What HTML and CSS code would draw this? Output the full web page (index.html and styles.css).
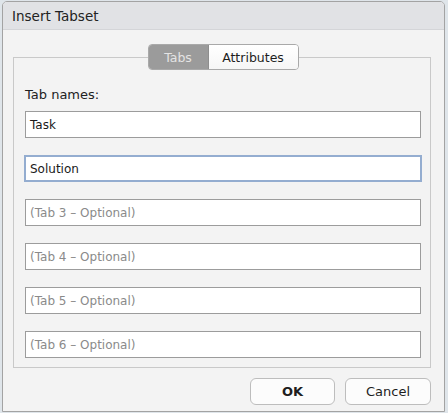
FILE: index.html
```html
<!DOCTYPE html>
<html>
<head>
<meta charset="utf-8">
<link rel="stylesheet" href="styles.css">
</head>
<body>
<div class="dialog">
  <div class="titlebar">Insert Tabset</div>
  <div class="content">
    <fieldset class="panel">
      <legend class="seg">
        <span class="seg-item seg-active">Tabs</span><span class="seg-item">Attributes</span>
      </legend>
      <div class="label">Tab names:</div>
      <div class="field">Task</div>
      <div class="field field-focus">Solution</div>
      <div class="field field-ph">(Tab 3 – Optional)</div>
      <div class="field field-ph">(Tab 4 – Optional)</div>
      <div class="field field-ph">(Tab 5 – Optional)</div>
      <div class="field field-ph">(Tab 6 – Optional)</div>
    </fieldset>
    <div class="buttons">
      <div class="btn btn-ok">OK</div>
      <div class="btn">Cancel</div>
    </div>
  </div>
</div>
</body>
</html>
```

FILE: styles.css
```css
html, body {
  margin: 0;
  padding: 0;
}
body {
  width: 448px;
  height: 413px;
  background: #dfe5ea;
  padding: 1px 0 0 2px;
  box-sizing: border-box;
  font-family: "DejaVu Sans", "Liberation Sans", sans-serif;
  overflow: hidden;
}
.dialog {
  width: 443px;
  height: 411px;
  box-sizing: border-box;
  border: 1px solid #a3a3a3;
  border-radius: 5px 5px 0 0;
  background: #f3f3f3;
  display: flex;
  flex-direction: column;
  overflow: hidden;
}
.titlebar {
  height: 28px;
  box-sizing: border-box;
  background: #e1e2e5;
  border-bottom: 1px solid #d4d5d8;
  padding: 6px 0 0 9px;
  font-size: 13.5px;
  color: #222;
}
.content {
  flex: 1;
  display: flex;
  flex-direction: column;
  padding: 14px 13px 0 10px;
}
.panel {
  margin: 0;
  border: 1px solid #c9c9c9;
  padding: 0 9px 9px 11px;
  display: flex;
  flex-direction: column;
  gap: 17px;
}
.seg {
  margin: 0 auto;
  padding: 0;
  display: flex;
  border: 1px solid #a9a9a9;
  border-radius: 4px;
  overflow: hidden;
  height: 26px;
  box-sizing: border-box;
  font-size: 12.5px;
}
.seg-item {
  display: flex;
  align-items: center;
  justify-content: center;
  background: linear-gradient(#ffffff, #f6f6f6);
  color: #1e1e1e;
  width: 89px;
}
.seg-active {
  width: 59px;
  background: #9b9b9b;
  color: #e4e4e4;
  border-right: 1px solid #8e8e8e;
}
.label {
  font-size: 13px;
  color: #222;
  margin-top: 17px;
  margin-bottom: -9px;
  height: 16px;
}
.field {
  height: 27px;
  box-sizing: border-box;
  border: 1px solid #9c9c9c;
  background: #fff;
  font-size: 12px;
  color: #1a1a1a;
  padding: 0 4px;
  display: flex;
  align-items: center;
}
.field-focus {
  border: 2px solid #94add0;
  margin: 0 -1px;
  padding: 0 4px;
}
.field-ph {
  color: #8a8a8a;
}
.buttons {
  display: flex;
  justify-content: flex-end;
  gap: 10px;
  padding-top: 10px;
}
.btn {
  width: 86px;
  height: 27px;
  box-sizing: border-box;
  border: 1px solid #bdbdbd;
  border-radius: 6px;
  background: #fcfcfc;
  font-size: 13px;
  color: #1e1e1e;
  display: flex;
  align-items: center;
  justify-content: center;
}
.btn-ok {
  width: 85px;
  font-weight: bold;
}
```
